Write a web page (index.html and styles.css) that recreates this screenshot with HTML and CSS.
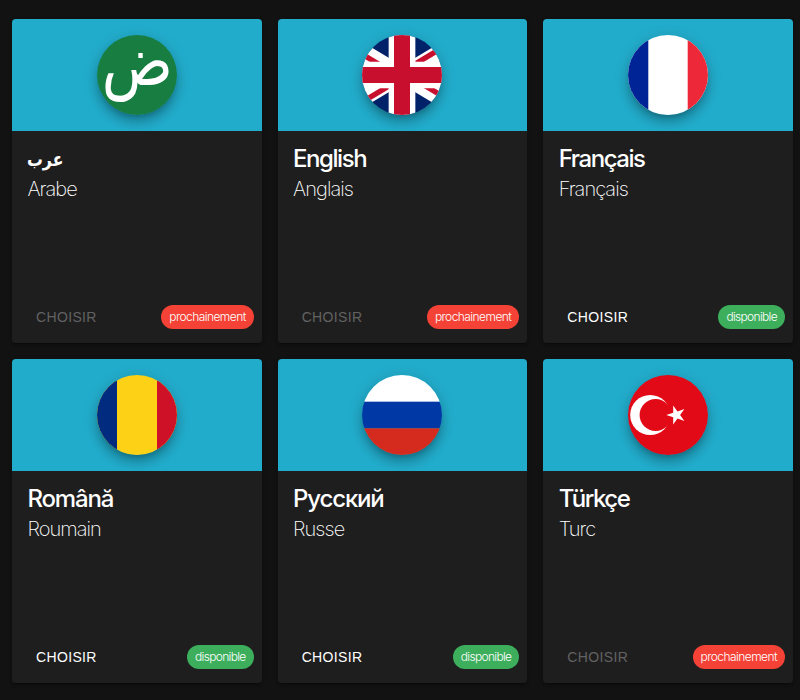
FILE: index.html
```html
<!DOCTYPE html>
<html lang="fr">
<head>
<meta charset="utf-8">
<title>Langues</title>
<link rel="stylesheet" href="styles.css">
</head>
<body>
<main class="grid">
  <article class="card">
    <div class="banner"><svg class="flag open" viewBox="0 0 80 80"><circle cx="40" cy="40" r="40" fill="#177d40"/><text class="letter" transform="translate(4.7 49.5) scale(1.07 1.24)" lang="ar">ض</text></svg></div>
    <div class="body"><h2 class="arabic" lang="ar"><span>عرب</span></h2><p>Arabe</p></div>
    <div class="actions"><button disabled>CHOISIR</button><span class="chip soon">prochainement</span></div>
  </article>
  <article class="card">
    <div class="banner"><svg class="flag" viewBox="0 0 80 80"><rect width="80" height="80" fill="#012169"/><path d="M-26.7 0L106.7 80M106.7 0L-26.7 80" stroke="#fff" stroke-width="16"/><path d="M-26.7 0L40 40V46.2L-26.7 6.2ZM40 40L106.7 0V-6.2L40 33.8ZM-26.7 80L40 40V46.2L-26.7 86.2ZM40 40L106.7 80V73.8L40 33.8Z" fill="#c8102e"/><path d="M40 0V80M0 40H80" stroke="#fff" stroke-width="26.7"/><path d="M40 0V80M0 40H80" stroke="#c8102e" stroke-width="16"/></svg></div>
    <div class="body"><h2 class="tight">English</h2><p>Anglais</p></div>
    <div class="actions"><button disabled>CHOISIR</button><span class="chip soon">prochainement</span></div>
  </article>
  <article class="card">
    <div class="banner"><svg class="flag" viewBox="0 0 80 80"><rect width="80" height="80" fill="#fff"/><rect width="20.3" height="80" fill="#002395"/><rect x="59.7" width="20.3" height="80" fill="#ed2939"/></svg></div>
    <div class="body"><h2 class="tight">Français</h2><p>Français</p></div>
    <div class="actions"><button>CHOISIR</button><span class="chip ready">disponible</span></div>
  </article>
  <article class="card">
    <div class="banner"><svg class="flag" viewBox="0 0 80 80"><rect width="80" height="80" fill="#fcd116"/><rect width="20" height="80" fill="#002b7f"/><rect x="60" width="20" height="80" fill="#ce1126"/></svg></div>
    <div class="body"><h2 lang="ro">Română</h2><p>Roumain</p></div>
    <div class="actions"><button>CHOISIR</button><span class="chip ready">disponible</span></div>
  </article>
  <article class="card">
    <div class="banner"><svg class="flag" viewBox="0 0 80 80"><rect width="80" height="27" fill="#fff"/><rect y="26.67" width="80" height="26.67" fill="#0039a6"/><rect y="53.33" width="80" height="26.67" fill="#d52b1e"/></svg></div>
    <div class="body"><h2 lang="ru">Русский</h2><p>Russe</p></div>
    <div class="actions"><button>CHOISIR</button><span class="chip ready">disponible</span></div>
  </article>
  <article class="card">
    <div class="banner"><svg class="flag" viewBox="0 0 80 80"><rect width="80" height="80" fill="#e30a17"/><circle cx="22.2" cy="40" r="20" fill="#fff"/><circle cx="27.6" cy="40" r="16" fill="#e30a17"/><path d="M38.3 40L45.2 37.8V30.5L49.5 36.4L56.4 34.1L52.1 40L56.4 45.9L49.5 43.6L45.2 49.5V42.2Z" fill="#fff"/></svg></div>
    <div class="body"><h2 class="tight" lang="tr">Türkçe</h2><p>Turc</p></div>
    <div class="actions"><button disabled>CHOISIR</button><span class="chip soon">prochainement</span></div>
  </article>
</main>
</body>
</html>
```
FILE: styles.css
```css
* { box-sizing: border-box; }
body {
  margin: 0;
  min-height: 700px;
  background: #121212;
  color: #fff;
  font-family: Inter, "DejaVu Sans", sans-serif;
}
.grid {
  display: grid;
  grid-template-columns: repeat(3, 1fr);
  grid-auto-rows: 324px;
  gap: 16px;
  padding: 19px 7px 17px 12px;
}
.card {
  display: flex;
  flex-direction: column;
  overflow: hidden;
  border-radius: 4px;
  background: #1e1e1e;
  box-shadow: 0 3px 1px -2px rgba(0,0,0,.2), 0 2px 2px rgba(0,0,0,.14), 0 1px 5px rgba(0,0,0,.12);
}
.banner {
  display: flex;
  justify-content: center;
  align-items: center;
  height: 112px;
  overflow: hidden;
  background: #22accb;
}
.flag {
  width: 80px;
  height: 80px;
  border-radius: 50%;
  box-shadow: 0 5px 5px -3px rgba(0,0,0,.2), 0 8px 10px 1px rgba(0,0,0,.14), 0 3px 14px 2px rgba(0,0,0,.12);
}
.open { overflow: visible; }
.letter { font: 55px "DejaVu Sans", sans-serif; fill: #fff; }
.body { flex: 1; padding: 12px 15.4px; }
h2 {
  margin: 0;
  height: 32px;
  font-size: 24px;
  line-height: 32px;
  font-weight: 500;
  letter-spacing: -1.15px;
}
.tight { letter-spacing: -1.45px; }
.arabic { letter-spacing: 0; }
.arabic span {
  display: block;
  font: bold 19px/33px "DejaVu Sans", sans-serif;
  transform: scaleX(.83);
  transform-origin: left;
}
p {
  margin: 0;
  font-size: 20px;
  line-height: 28px;
  font-weight: 200;
  letter-spacing: -.95px;
}
.actions {
  display: flex;
  align-items: center;
  justify-content: space-between;
  height: 52px;
  padding: 0 8px;
}
button {
  height: 36px;
  padding: 0 16px;
  border: 0;
  background: none;
  color: #fff;
  font: 14px/36px "Liberation Sans", sans-serif;
  letter-spacing: .35px;
}
button:disabled { color: #626262; }
.chip {
  height: 24px;
  padding: 0 8px;
  border-radius: 12px;
  font-size: 12px;
  line-height: 24px;
  font-weight: 300;
  letter-spacing: -.56px;
}
.ready { letter-spacing: -.68px; }
.soon { background: #f44336; }
.ready { background: #3cae5c; }
```
